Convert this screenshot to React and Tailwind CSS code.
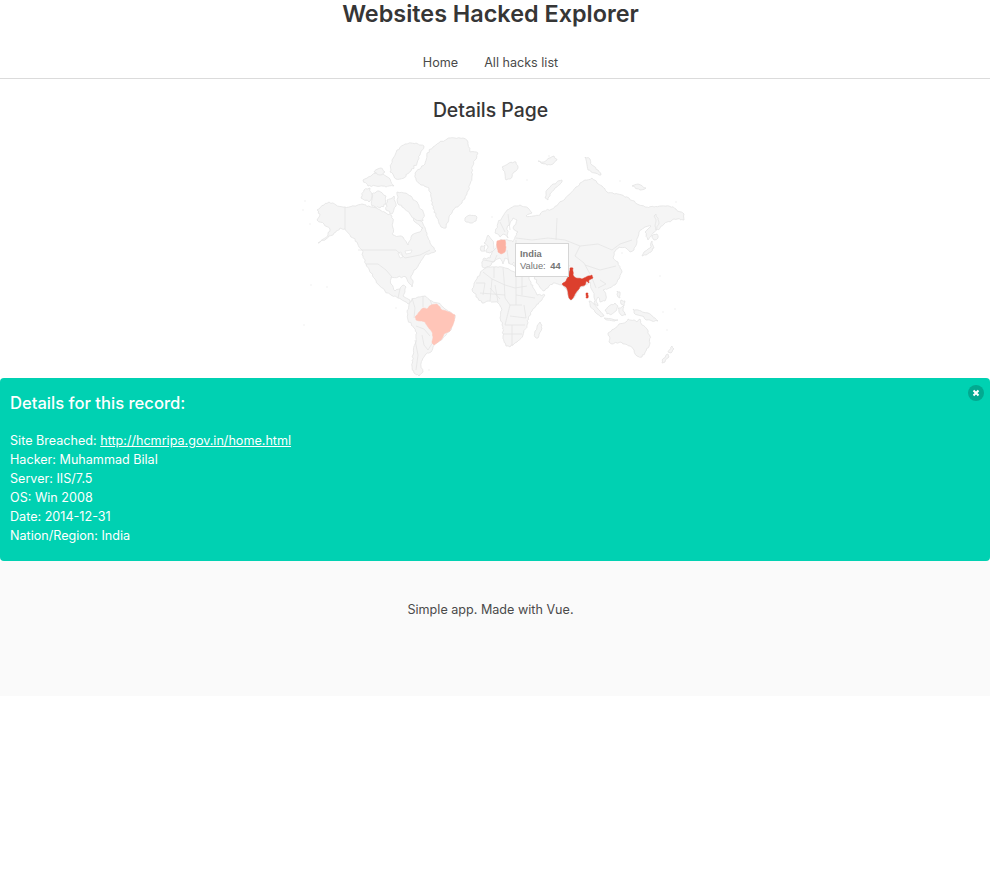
import React from 'react';

const land = [
  // north america, hudson bay opens to the north
  'M317,210 L324,205 L329,202 L336,205 L345,207 L354,206 L362,204 L371,207 L378,209 L386,213 L392,216 L393,222 L393,228 L393,235 L403,237 L408,245 L412,235 L420,232 L423,228 L415,222 L413,216 L418,219 L423,224 L427,233 L430,243 L436,251 L431,253 L426,254 L423,258 L419,264 L414,270 L411,276 L413,283 L412,287 L409,283 L406,277 L398,277 L391,277 L391,284 L395,291 L400,289 L403,285 L406,287 L405,292 L403,296 L408,299 L412,303 L408,304 L404,301 L398,298 L391,295 L385,291 L379,285 L375,279 L371,273 L366,264 L363,256 L362,250 L357,242 L350,235 L345,229 L340,228 L334,233 L326,239 L318,243 L328,235 L330,229 L324,224 L317,220 L320,214 Z',
  // south america
  'M407,312 L409,305 L412,299 L418,297 L425,296 L432,301 L438,303 L445,309 L455,315 L453,324 L450,331 L443,338 L438,342 L433,347 L431,352 L426,354 L423,358 L421,366 L423,372 L419,376 L414,373 L412,366 L413,355 L415,344 L417,333 L414,328 L408,320 Z',
  // greenland
  'M427,153 L433,147 L439,143 L447,139 L455,138 L463,138 L468,142 L470,152 L478,153 L475,160 L472,167 L472,176 L470,184 L467,194 L462,203 L453,210 L449,217 L446,228 L441,227 L437,218 L433,208 L431,197 L429,188 L421,185 L416,180 L415,173 L420,169 L425,164 Z',
  // arctic canada
  'M392,160 L397,150 L405,144 L416,143 L424,146 L420,155 L417,163 L411,171 L404,178 L396,179 L390,172 Z',
  'M364,190 L370,188 L372,197 L369,202 L361,198 Z',
  'M372,194 L379,191 L386,196 L386,204 L380,208 L372,206 Z',
  'M397,192 L404,193 L411,196 L418,204 L424,214 L423,221 L416,220 L410,214 L404,208 L398,204 Z',
  'M363,180 L372,175 L380,172 L389,178 L394,186 L386,187 L376,186 L368,186 Z',
  'M387,200 L394,196 L396,206 L392,214 L386,210 Z',
  'M465,218 L470,215 L477,217 L476,221 L470,223 L466,222 Z',
  'M374,172 L381,168 L385,172 L380,175 Z',
  // great britain and ireland
  'M484,243 L488,235 L492,240 L495,250 L490,253 L486,252 L488,246 Z',
  'M481,246 L485,245 L485,251 L481,251 Z',
  // eurasia
  'M482,266 L483,259 L490,258 L492,252 L495,249 L498,243 L500,240 L503,240 L508,240 L513,242 L515,237 L518,232 L513,228 L517,220 L513,218 L507,228 L508,238 L503,234 L500,237 L495,233 L498,223 L503,216 L507,210 L514,206 L520,205 L528,208 L532,213 L526,216 L533,216 L540,215 L544,211 L552,209 L559,203 L565,199 L570,194 L576,187 L585,180 L592,178 L597,183 L602,186 L607,192 L614,194 L622,195 L629,198 L637,204 L645,207 L654,207 L661,206 L669,206 L676,209 L684,214 L684,220 L677,219 L672,220 L664,224 L660,228 L654,232 L648,240 L645,232 L651,226 L645,227 L639,232 L637,242 L634,250 L630,252 L626,248 L619,247 L614,252 L613,258 L618,262 L620,268 L622,272 L619,279 L615,285 L609,288 L603,290 L606,296 L605,301 L600,302 L598,297 L596,301 L598,306 L595,304 L594,296 L592,290 L590,282 L585,285 L580,288 L576,294 L573,299 L570,300 L567,290 L562,285 L558,284 L553,283 L549,286 L543,291 L538,284 L533,275 L530,270 L524,269 L519,268 L514,266 L510,264 L508,259 L505,258 L503,264 L500,258 L497,259 L493,262 L490,266 L485,268 Z',
  // africa
  'M484,269 L488,267 L494,267 L502,267 L510,270 L516,272 L523,272 L527,273 L529,279 L534,289 L537,295 L545,295 L541,301 L536,306 L532,311 L529,316 L527,325 L523,335 L517,342 L510,347 L506,346 L503,336 L503,327 L500,318 L502,310 L498,303 L494,302 L488,301 L482,303 L478,298 L474,293 L472,289 L476,280 L480,274 Z',
  // madagascar
  'M540,322 L542,325 L541,331 L538,338 L535,337 L535,331 L537,327 Z',
  // australia, new guinea, new zealand
  'M608,333 L614,329 L619,324 L626,322 L628,319 L634,320 L637,322 L640,319 L642,325 L647,329 L650,336 L650,343 L646,351 L642,357 L637,356 L634,350 L630,346 L625,344 L620,342 L612,344 L609,342 L610,338 Z',
  'M633,309 L641,311 L648,313 L653,317 L658,321 L652,321 L646,320 L642,316 L634,313 Z',
  'M672,346 L674,349 L671,353 L668,352 Z',
  'M668,354 L669,357 L665,362 L662,363 L662,360 Z',
  // japan and sakhalin
  'M652,236 L657,234 L658,238 L654,240 Z',
  'M652,241 L654,248 L651,252 L646,255 L642,256 L644,252 L650,248 Z',
  'M655,226 L656,221 L654,216 L656,214 L659,222 L656,230 Z',
  // islands of south east asia
  'M589,301 L594,304 L600,311 L604,316 L601,317 L595,312 L590,305 Z',
  'M604,318 L612,319 L618,320 L615,321 L607,320 Z',
  'M605,310 L609,306 L615,303 L618,306 L616,311 L612,314 L607,314 Z',
  'M618,308 L623,306 L623,311 L626,315 L621,315 L619,312 Z',
  'M617,291 L620,292 L620,298 L618,297 Z',
  'M621,300 L625,301 L624,306 L621,304 Z',
  // svalbard and the russian arctic
  'M502,167 L509,163 L516,162 L518,168 L514,172 L510,179 L506,180 L505,174 Z',
  'M538,161 L544,162 L549,158 L554,156 L557,160 L553,164 L547,165 Z',
  'M545,198 L547,190 L553,184 L562,180 L562,182 L555,188 L550,194 L548,200 Z',
  'M585,157 L590,159 L592,165 L598,170 L601,175 L595,173 L588,170 Z',
  'M632,186 L638,184 L646,188 L640,190 Z',
];

const lakes = [
  'M398,253 L401,252 L403,257 L400,258 Z',
  'M405,251 L412,250 L411,253 L406,254 Z',
  'M512,264 L514,262 L514,266 Z',
];

const borders = [
  // north america
  'M345,207 L345,229', 'M358,250 L396,250 L405,258 L420,255 L430,250',
  'M366,264 L378,264 L386,270 L392,277', 'M398,298 L400,289',
  // south america
  'M412,298 L415,308 L414,318', 'M423,296 L423,307', 'M430,300 L432,305', 'M415,340 L418,355 L416,370',
  'M433,342 L428,350 L424,345 L422,335', 'M416,326 L424,329 L430,336',
  // africa
  'M483,272 L492,279 L505,285 L515,288 L527,286', 'M492,279 L490,301', 'M503,268 L504,279 L505,298 L510,305 L522,305',
  'M516,272 L516,305', 'M480,293 L505,295', 'M510,305 L505,325 L525,325', 'M503,334 L522,334', 'M490,288 L500,299',
  'M516,295 L535,298', 'M476,283 L485,283 L483,295', 'M495,285 L498,302', 'M524,305 L526,318 L510,316', 'M512,325 L512,346',
  'M522,276 L522,295', 'M494,267 L494,278',
  // europe and asia
  'M484,260 L494,262 L497,255', 'M507,250 L509,264', 'M516,240 L516,262', 'M516,238 L532,240 L548,238 L565,240',
  'M565,240 L580,246 L598,244 L612,250', 'M612,250 L620,244 L632,240', 'M580,246 L575,256 L584,263 L590,274',
  'M585,265 L600,270 L616,266', 'M600,280 L606,284 L598,288', 'M548,255 L560,262 L570,266', 'M540,262 L545,274 L556,276',
  'M550,250 L568,256', 'M592,278 L596,288', 'M500,222 L505,232', 'M508,214 L510,230', 'M557,218 L556,240',
];

const countries = [
  { d: 'M415,317 L423,308 L427,309 L431,305 L437,304 L442,310 L449,312 L455,315 L454,322 L450,331 L444,334 L441,340 L437,343 L434,345 L432,343 L433,337 L432,332 L428,327 L425,322 L420,321 L416,320 Z', fill: '#ffc5b8' },
  { d: 'M497,241 L501,240 L505,240 L506,247 L505,252 L501,254 L498,252 L497,247 Z', fill: '#fcb1a2' },
  { d: 'M562,284 L566,281 L569,276 L570,268 L573,268 L573,275 L576,278 L582,279 L588,276 L592,275 L593,278 L589,280 L589,283 L586,281 L585,285 L581,286 L578,290 L575,294 L573,298 L571,300 L569,298 L568,292 L566,287 Z', fill: '#dc3f2d' },
  { d: 'M586,293 L588,293 L588,298 L586,298 Z', fill: '#dc3f2d' },
];

const specks = [
  [305, 201], [303, 210], [310, 224], [304, 325], [311, 285], [327, 287], [396, 308],
  [492, 217], [429, 370], [622, 253], [660, 276], [654, 318], [667, 330], [675, 309], [549, 156],
  [527, 180], [620, 181], [676, 202], [663, 312],
];

const details = [
  ['Hacker', 'Muhammad Bilal'],
  ['Server', 'IIS/7.5'],
  ['OS', 'Win 2008'],
  ['Date', '2014-12-31'],
  ['Nation/Region', 'India'],
];

// breaks long straight edges up so coastlines look jagged, like the real map data
function roughen(d, amp) {
  const pts = d.match(/-?[\d.]+,-?[\d.]+/g).map(p => p.split(',').map(Number));
  const out = [];
  pts.forEach((p, i) => {
    const q = pts[(i + 1) % pts.length];
    const steps = Math.max(1, Math.round(Math.hypot(q[0] - p[0], q[1] - p[1]) / 2));
    for (let s = 0; s < steps; s++) {
      const t = s / steps;
      const x = p[0] + (q[0] - p[0]) * t;
      const y = p[1] + (q[1] - p[1]) * t;
      const n = s === 0 ? 0 : amp;
      out.push(`${(x + Math.sin(x * 12.9 + y * 78.2) * n).toFixed(1)},${(y + Math.sin(x * 39.3 + y * 11.7) * n).toFixed(1)}`);
    }
  });
  return `M${out.join(' L')} Z`;
}

function WorldMap() {
  return (
    <svg viewBox="295 130 400 248" className="block w-[400px] h-[248px]">
      <g fill="#f5f5f5" stroke="#e3e3e3" strokeWidth="0.8" strokeLinejoin="round">
        {land.map((d, i) => <path key={i} d={roughen(d, 0.7)} />)}
      </g>
      <g fill="#ffffff" stroke="#e3e3e3" strokeWidth="0.6">
        {lakes.map((d, i) => <path key={i} d={d} />)}
      </g>
      <g fill="none" stroke="#e3e3e3" strokeWidth="0.7">
        {borders.map((d, i) => <path key={i} d={d} />)}
      </g>
      <g fill="#eeeeee">
        {specks.map(([x, y], i) => <circle key={i} cx={x} cy={y} r="0.8" />)}
      </g>
      {countries.map((c, i) => <path key={i} d={roughen(c.d, 0.35)} fill={c.fill} stroke={c.fill} strokeWidth="0.5" />)}
    </svg>
  );
}

export default function App() {
  return (
    <div className="min-h-[872px] bg-white text-[12.6px] text-[#4a4a4a] font-['Inter','Noto_Sans',sans-serif]">
      <header className="border-b border-[#dbdbdb] h-[79px]">
        <h1 className="pr-[9px] text-center text-[23.4px] leading-[27px] font-semibold text-[#363636]">Websites Hacked Explorer</h1>
        <nav className="pr-[9px] mt-[26px] flex justify-center gap-[26px] leading-[20px]">
          <a href="#">Home</a>
          <a href="#">All hacks list</a>
        </nav>
      </header>

      <main>
        <h2 className="pr-[9px] pt-[19px] text-center text-[19.4px] leading-[24px] font-medium text-[#363636]">Details Page</h2>
        <div className="relative mx-auto mt-[8px] w-[400px]">
          <WorldMap />
          <div className="absolute left-[220px] top-[113px] w-[54px] h-[34px] bg-white border border-[#d6d6d6] pl-[4px] pt-[4px] text-[9.3px] leading-[12px] text-[#757575] font-['Liberation_Sans',sans-serif]">
            <div className="font-bold">India</div>
            <div>Value: <span className="ml-[2px] font-bold">44</span></div>
          </div>
        </div>

        <section className="relative bg-[#00d1b2] rounded-[4px] h-[183px] pl-[10px] pt-[15px] text-white leading-[19px]">
          <button className="absolute right-[6px] top-[7px] w-[16px] h-[16px] rounded-full bg-[#0a0a0a]/20 flex items-center justify-center">
            <svg viewBox="0 0 16 16" className="w-[16px] h-[16px]">
              <path d="M5.5 5.5 L10.5 10.5 M10.5 5.5 L5.5 10.5" stroke="#fff" strokeWidth="2" />
            </svg>
          </button>
          <h3 className="text-[16.6px] leading-[20px] font-medium">Details for this record:</h3>
          <div className="mt-[18px]">
            <p>Site Breached: <a href="#" className="underline">http://hcmripa.gov.in/home.html</a></p>
            {details.map(([label, value]) => (
              <p key={label}>{label}: {value}</p>
            ))}
          </div>
        </section>
      </main>

      <footer className="bg-[#fafafa] h-[135px] pt-[39px] pr-[9px] text-center leading-[20px]">
        Simple app. Made with Vue.
      </footer>
    </div>
  );
}
